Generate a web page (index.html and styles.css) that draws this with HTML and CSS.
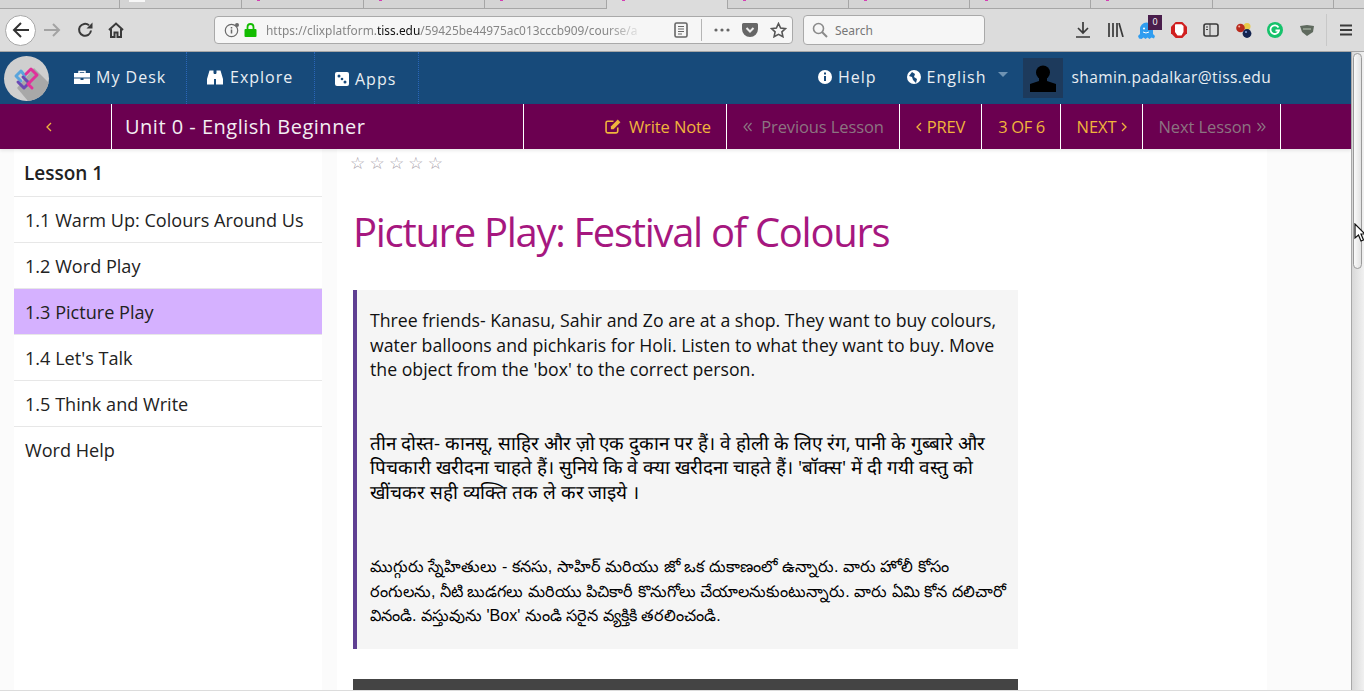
FILE: index.html
```html
<!DOCTYPE html>
<html lang="en">
<head>
<meta charset="UTF-8" />
<meta name="viewport" content="width=device-width, initial-scale=1" />
<title>Picture Play: Festival of Colours</title>
<link rel="stylesheet" href="styles.css">
</head>
<body>
<!-- browser chrome -->
<div class="tabs">
    <span class="tab" style="width:119px"></span>
    <span class="tab" style="width:121px"><i class="fav fav-white"></i></span>
    <span class="tab" style="width:121px"><i class="fav"></i></span>
    <span class="tab" style="width:120px"><i class="fav"></i></span>
    <span class="tab" style="width:121px"><i class="fav"></i></span>
    <span class="tab tab-active" style="width:120px"><i class="fav"></i></span>
    <span class="tab" style="width:120px"><i class="fav"></i></span>
    <span class="tab" style="width:120px"><i class="fav"></i></span>
    <span class="tab" style="width:120px"><i class="fav"></i></span>
    <span class="tab" style="width:121px"><i class="fav"></i></span>
    <span class="tab" style="width:120px"></span>
</div>
<div class="toolbar">
    <span class="back-btn">
        <svg width="20" height="20" viewBox="0 0 20 20"><path d="M18 10H3M10 3l-7 7 7 7" fill="none" stroke="#333" stroke-width="2"/></svg>
    </span>
    <svg class="tool-forward" width="18" height="18" viewBox="0 0 18 18"><path d="M1 9h15M10 3l6 6-6 6" fill="none" stroke="#a3a3a3" stroke-width="2"/></svg>
    <svg class="tool-reload" width="18" height="18" viewBox="0 0 18 18"><path d="M15 9.500a6 6 0 1 1-2-5.200" fill="none" stroke="#3a3a3a" stroke-width="2"/><path d="M16.500 1.500v6h-6z" fill="#3a3a3a"/></svg>
    <svg class="tool-home" width="18" height="18" viewBox="0 0 18 18"><path d="M2 9l7-6.500L16 9M4 8v8h3.500v-4.500h3V16H14V8" fill="none" stroke="#3a3a3a" stroke-width="2"/></svg>
    <div class="urlbar">
        <svg width="16" height="16" viewBox="0 0 16 16"><circle cx="7.500" cy="8.500" r="6.200" fill="none" stroke="#6a6a6a" stroke-width="1.200"/><path d="M7.500 7.500v4M7.500 5v1.500" stroke="#6a6a6a" stroke-width="1.500"/><circle cx="13" cy="3" r="2" fill="#6a6a6a"/></svg>
        <svg class="lock" width="13" height="14" viewBox="0 0 13 14"><path d="M3.500 6V4a3 3 0 0 1 6 0v2" fill="none" stroke="#12bc00" stroke-width="1.800"/><rect x="0.500" y="6" width="12" height="8" rx="1" fill="#12bc00"/></svg>
        <span class="url"><span class="url-dim">https://clixplatform.</span>tiss.edu<span class="url-dim">/59425be44975ac013cccb909/course/a</span></span>
        <svg class="reader" width="14" height="16" viewBox="0 0 14 16"><rect x="1" y="1" width="12" height="14" rx="1.500" fill="none" stroke="#666" stroke-width="1.600"/><path d="M4 4.500h6M4 7h6M4 9.500h6M4 12h4" stroke="#666"/></svg>
        <span class="url-sep"></span>
        <svg class="dots" width="16" height="4" viewBox="0 0 16 4"><circle cx="2" cy="2" r="1.600" fill="#666"/><circle cx="8" cy="2" r="1.600" fill="#666"/><circle cx="14" cy="2" r="1.600" fill="#666"/></svg>
        <svg class="pocket" width="16" height="15" viewBox="0 0 16 15"><path d="M1.500 0h13A1.500 1.500 0 0 1 16 1.500V6a8 8 0 0 1-16 0V1.500A1.500 1.500 0 0 1 1.500 0z" fill="#666"/><path d="M4.500 5L8 8.500 11.500 5" fill="none" stroke="#eee" stroke-width="2"/></svg>
        <svg class="star" width="17" height="16" viewBox="0 0 17 16"><path d="M8.500 1.500l2.100 4.500 4.900.6-3.600 3.300 1 4.800-4.400-2.400-4.400 2.400 1-4.800L1.500 6.600l4.900-.6z" fill="none" stroke="#555" stroke-width="1.600"/></svg>
    </div>
    <div class="searchbar">
        <svg width="16" height="16" viewBox="0 0 16 16"><circle cx="6.500" cy="6.500" r="5" fill="none" stroke="#8a8a8a" stroke-width="1.600"/><path d="M10 10l5 5" stroke="#8a8a8a" stroke-width="2"/></svg>
        <span>Search</span>
    </div>
    <div class="tool-icons">
        <svg width="14" height="16" viewBox="0 0 14 16"><path d="M7 0v10M2 6l5 5 5-5M0 15h14" fill="none" stroke="#3a3a3a" stroke-width="1.700"/></svg>
        <svg class="ti-lib" width="16" height="14" viewBox="0 0 16 14"><path d="M1 0v14M5 0v14M9 0v14M11 0l4 14" fill="none" stroke="#3a3a3a" stroke-width="1.700"/></svg>
        <span class="ghost">
            <svg width="17" height="17" viewBox="0 0 17 17"><path d="M1 16.500L0 14l2-2V7a6.500 6.500 0 0 1 13 0v5l2 2-1 2.500-2.500-1-2 1.500-2-1.500-2 1.500-2-1.500-2 1.500z" fill="#2f9df0"/><circle cx="6" cy="6.500" r="1" fill="#fff"/><path d="M5 10q3 2 6 0" stroke="#fff" fill="none"/></svg>
            <span class="ghost-badge">0</span>
        </span>
        <svg class="ti-stop" width="16" height="16" viewBox="0 0 16 16"><path d="M4.700 0h6.600L16 4.700v6.600L11.300 16H4.700L0 11.300V4.700z" fill="#d01f1f"/><path d="M4 3.500a1 1 0 0 1 1-1.200h5.500L12.500 4v6l-2 3.500h-4L4 10z" fill="#fff"/></svg>
        <svg class="ti-side" width="16" height="14" viewBox="0 0 16 14"><rect x="1" y="1" width="14" height="12" rx="2" fill="none" stroke="#3a3a3a" stroke-width="1.600"/><path d="M7 1v12M3 4h2M3 6.500h2" stroke="#3a3a3a"/></svg>
        <svg class="ti-balls" width="16" height="15" viewBox="0 0 16 15"><circle cx="11" cy="3.500" r="3.500" fill="#e8c94a"/><circle cx="4.500" cy="5" r="4.300" fill="#b92a1c"/><circle cx="11" cy="10.500" r="4.400" fill="#14244f"/><circle cx="3.200" cy="3.600" r="1" fill="#f3b5a8"/><circle cx="10" cy="9" r="1.100" fill="#7f9ad8"/></svg>
        <svg class="ti-gram" width="16" height="16" viewBox="0 0 16 16"><circle cx="8" cy="8" r="8" fill="#15c26b"/><path d="M11.500 5.500a4.300 4.300 0 1 0 .5 3H8.500" fill="none" stroke="#fff" stroke-width="1.800"/></svg>
        <svg class="ti-mask" width="14" height="11" viewBox="0 0 14 11"><path d="M0 1l7-1 7 1-1 6-6 4-5-4z" fill="#5f6a5e"/><path d="M3 4h8" stroke="#b9c6b4"/></svg>
        <span class="tool-sep"></span>
        <svg class="ti-menu" width="12" height="12" viewBox="0 0 12 12"><path d="M0 1.500h12M0 6h12M0 10.500h12" stroke="#3a3a3a" stroke-width="1.800"/></svg>
    </div>
</div>

<div class="viewport">
    <div class="page">
        <nav class="topnav">
            <div class="logo">
                <svg width="45" height="45" viewBox="0 0 45 45">
                    <path d="M30 12l15 15v18H24L13 32z" fill="#a8a8a8"/>
                    <g fill="none" stroke-width="3" stroke-linejoin="round" stroke-linecap="round">
                        <path d="M21 20l-4-5-5 5 5 5" stroke="#5aa5dc"/>
                        <path d="M14 26l6 6 5-5-6-6" stroke="#6b49b4"/>
                        <path d="M22 18l5-5 6 6-9 9 4 4" stroke="#e0329a"/>
                    </g>
                </svg>
            </div>
            <a class="nav-item nav-desk">
                <svg width="16" height="14" viewBox="0 0 16 14"><path d="M5 3V1.500h6V3" fill="none" stroke="#fff" stroke-width="1.500"/><path d="M0 3h16v4.500H0zM0 8.500h6.500V10h3V8.500H16V14H0z" fill="#fff"/></svg>
                My Desk
            </a>
            <a class="nav-item nav-explore">
                <svg width="16" height="15" viewBox="0 0 16 15"><path d="M2.500 0.500h4v3H7v11H0V9zM13.500 0.500h-4v3H9v11h7V9z" fill="#fff"/><path d="M7 4h2v5H7z" fill="#fff"/></svg>
                Explore
            </a>
            <a class="nav-item nav-apps">
                <svg width="14" height="14" viewBox="0 0 14 14"><rect width="14" height="14" rx="2" fill="#fff"/><circle cx="4" cy="4" r="1.500" fill="#17497a"/><circle cx="10" cy="10" r="1.500" fill="#17497a"/><circle cx="7" cy="7" r="1.300" fill="#17497a"/></svg>
                Apps
            </a>
            <a class="nav-right nav-help">
                <svg width="14" height="14" viewBox="0 0 14 14"><circle cx="7" cy="7" r="7" fill="#fff"/><path d="M7 6v5M7 2.500v2" stroke="#17497a" stroke-width="2"/></svg>
                Help
            </a>
            <a class="nav-right nav-lang">
                <svg width="14" height="14" viewBox="0 0 14 14"><circle cx="7" cy="7" r="7" fill="#fff"/><path d="M5 2l3 2-1 3 3 2-1 4-3-3-1-3-3-1z" fill="#17497a"/></svg>
                English
                <span class="caret"></span>
            </a>
            <span class="avatar">
                <svg width="28" height="27" viewBox="0 0 28 27"><circle cx="14" cy="7.500" r="7" fill="#000"/><path d="M10 13h8v3l9 3v8H1v-8l9-3z" fill="#000"/></svg>
            </span>
            <span class="username">shamin.padalkar@tiss.edu</span>
        </nav>

        <div class="subnav">
            <a class="sub-back">
                <svg width="6" height="10" viewBox="0 0 6 10"><path d="M5 1L1 5l4 4" fill="none" stroke="#f0b43c" stroke-width="1.300"/></svg>
            </a>
            <div class="sub-title">Unit 0 - English Beginner</div>
            <a class="sub-item sub-note">
                <svg width="17" height="15" viewBox="0 0 16 14"><path d="M12 8v3.500a1.500 1.500 0 0 1-1.500 1.500h-8A1.500 1.500 0 0 1 1 11.500v-8A1.500 1.500 0 0 1 2.500 2H8" fill="none" stroke="#f0b43c" stroke-width="1.500"/><path d="M5.500 7L12 .5 14.500 3 8 9.500H5.500z" fill="#f0b43c"/></svg>
                Write Note
            </a>
            <a class="sub-item sub-prevlesson dim">
                <svg width="9" height="10" viewBox="0 0 9 10"><path d="M4.500 1L1 5l3.500 4M8.500 1L5 5l3.500 4" fill="none" stroke="#8b7481" stroke-width="1.200"/></svg>
                Previous Lesson
            </a>
            <a class="sub-item sub-prev">
                <svg width="6" height="10" viewBox="0 0 6 10"><path d="M5 1L1 5l4 4" fill="none" stroke="#f0b43c" stroke-width="1.300"/></svg>
                PREV
            </a>
            <a class="sub-item sub-count">3 OF 6</a>
            <a class="sub-item sub-next">
                NEXT
                <svg width="6" height="10" viewBox="0 0 6 10"><path d="M1 1l4 4-4 4" fill="none" stroke="#f0b43c" stroke-width="1.300"/></svg>
            </a>
            <a class="sub-item sub-nextlesson dim">
                Next Lesson
                <svg width="9" height="10" viewBox="0 0 9 10"><path d="M.5 1L4 5 .5 9M4.500 1L8 5 4.500 9" fill="none" stroke="#8b7481" stroke-width="1.200"/></svg>
            </a>
        </div>

        <div class="main">
            <aside class="sidebar">
                <div class="side-head">Lesson 1</div>
                <a class="side-link">1.1 Warm Up: Colours Around Us</a>
                <a class="side-link">1.2 Word Play</a>
                <a class="side-link active">1.3 Picture Play</a>
                <a class="side-link">1.4 Let's Talk</a>
                <a class="side-link">1.5 Think and Write</a>
                <a class="side-link last">Word Help</a>
            </aside>
            <section class="content">
                <div class="stars">&#9734;&#9734;&#9734;&#9734;&#9734;</div>
                <h1>Picture Play: Festival of Colours</h1>
                <blockquote class="note">
                    <p class="en">Three friends- Kanasu, Sahir and Zo are at a shop. They want to buy colours, water balloons and pichkaris for Holi. Listen to what they want to buy. Move the object from the 'box' to the correct person.</p>
                    <p class="hi">तीन दोस्त- कानसू, साहिर और ज़ो एक दुकान पर हैं। वे होली के लिए रंग, पानी के गुब्बारे और पिचकारी खरीदना चाहते हैं। सुनिये कि वे क्या खरीदना चाहते हैं। 'बॉक्स' में दी गयी वस्तु को खींचकर सही व्यक्ति तक ले कर जाइये ।</p>
                    <p class="te">ముగ్గురు స్నేహితులు - కనసు, సాహిర్ మరియు జో ఒక దుకాణంలో ఉన్నారు. వారు హోలీ కోసం రంగులను, నీటి బుడగలు మరియు పిచికారీ కొనుగోలు చేయాలనుకుంటున్నారు. వారు ఏమి కోన దలిచారో వినండి. వస్తువును 'Box' నుండి సరైన వ్యక్తికి తరలించండి.</p>
                </blockquote>
                <div class="player"></div>
            </section>
        </div>
    </div>
    <div class="scrollbar"><span class="thumb"></span></div>
</div>
<div class="window-edge"></div>

<!-- mouse pointer caught in the shot -->
<svg class="cursor" width="11" height="19" viewBox="0 0 11 19"><path d="M1 1v14l3.500-3 2.500 6 2.500-1-2.500-6h4z" fill="#fff" stroke="#111" stroke-width="1.200"/></svg>
</body>
</html>
```

FILE: styles.css
```css
html, body { margin: 0; height: 100%; overflow: hidden; }
body { font-family: "Open Sans", sans-serif; background: #d9d9d9; }
a { color: inherit; text-decoration: none; }

/* browser chrome */
.tabs { display: flex; height: 8px; background: #d4d4d4; border-bottom: 1px solid #a6a6a6; }
.tab { height: 8px; border-right: 1px solid #a6a6a6; box-sizing: content-box; flex: none; overflow: hidden; }
.tab-active { background: #dcdcdc; height: 9px; }
.fav { display: block; width: 3px; height: 1px; margin-left: 15px; background: #d43fb4; }
.fav-white { width: 16px; height: 2px; margin-left: 9px; background: #f7f7f7; }

.toolbar { display: flex; align-items: center; height: 42px; background: #dcdcdc; border-bottom: 1px solid #a6a6a6; padding-left: 5px; }
.back-btn { width: 29px; height: 29px; border: 1px solid #a8a8a8; border-radius: 50%; background: #fff; display: flex; align-items: center; justify-content: center; flex: none; }
.tool-forward { margin-left: 7px; }
.tool-reload { margin-left: 15px; }
.tool-home { margin-left: 13px; }
.urlbar { display: flex; align-items: center; width: 579px; height: 28px; margin-left: 89px; padding-left: 9px; box-sizing: border-box; background: #f6f6f6; border: 1px solid #a9a9a9; border-radius: 4px; flex: none; }
.lock { margin-left: 4px; }
.url { margin-left: 9px; width: 395px; font-family: "Noto Sans", sans-serif; font-size: 11.900px; color: #111; white-space: nowrap; overflow: hidden; -webkit-mask-image: linear-gradient(to right, #000 340px, transparent 378px); mask-image: linear-gradient(to right, #000 340px, transparent 378px); }
.url-dim { color: #858585; }
.reader { margin-left: 13px; }
.url-sep { width: 1px; height: 22px; background: #b5b5b5; margin-left: 13px; }
.dots { margin-left: 12px; }
.pocket { margin-left: 12px; }
.star { margin-left: 12px; }
.searchbar { display: flex; align-items: center; gap: 7px; width: 172px; height: 28px; margin-left: 10px; padding-left: 8px; background: #f6f6f6; border: 1px solid #a9a9a9; border-radius: 4px; font-family: "Noto Sans", sans-serif; font-size: 12px; color: #777; flex: none; }
.tool-icons { display: flex; align-items: center; margin-left: 91px; }
.ti-lib { margin-left: 18px; }
.ghost { position: relative; display: flex; margin-left: 14px; width: 24px; }
.ghost-badge { position: absolute; left: 10px; top: -7px; width: 14px; height: 15px; background: #4a1e4c; color: #fff; font-size: 9px; line-height: 13px; text-align: center; }
.ti-stop { margin-left: 9px; }
.ti-side { margin-left: 16px; }
.ti-balls { margin-left: 17px; }
.ti-gram { margin-left: 15px; }
.ti-mask { margin-left: 17px; }
.tool-sep { width: 1px; height: 32px; background: #c8c8c8; margin-left: 12px; }
.ti-menu { margin-left: 13px; }

.viewport { display: flex; height: 638px; background: #fbfbfb; }
.page { width: 1351px; flex: none; overflow: hidden; }
.window-edge { height: 2px; background: #dcdcdc; }

/* blue nav */
.topnav { display: flex; align-items: center; height: 52px; background: #174a7a; color: #e9eef3; font-size: 16px; letter-spacing: 1px; }
.logo { width: 45px; height: 45px; margin-left: 4px; border-radius: 50%; background: #cfcfcf; overflow: hidden; flex: none; }
.nav-item { display: flex; align-items: center; gap: 6px; height: 52px; padding-bottom: 2px; box-sizing: border-box; border-right: 1px dotted #2a66b8; flex: none; }
.nav-desk { width: 138px; padding-left: 25px; }
.nav-explore { width: 128px; padding-left: 20px; gap: 7px; }
.nav-apps { width: 104px; padding-left: 20px; padding-top: 2px; padding-bottom: 0; }
.nav-right { display: flex; align-items: center; gap: 6px; padding-bottom: 2px; flex: none; }
.nav-help { margin-left: 399px; }
.nav-lang { margin-left: 30px; }
.caret { width: 0; height: 0; border-left: 5px solid transparent; border-right: 5px solid transparent; border-top: 5px solid #6f93b3; margin: 0 0 6px 5px; }
.avatar { width: 40px; height: 40px; margin-left: 15px; background: #1d3a5c; display: flex; align-items: flex-end; justify-content: center; flex: none; }
.avatar svg { margin-bottom: 6px; }
.username { margin-left: 9px; padding-bottom: 2px; font-size: 15.500px; letter-spacing: 0.38px; white-space: nowrap; }

/* purple bar */
.subnav { display: flex; align-items: center; height: 45px; background: #6b0050; color: #f0b43c; font-size: 16.500px; box-shadow: 0 2px 3px rgba(0,0,0,0.08); position: relative; }
.subnav > * { height: 45px; box-sizing: border-box; display: flex; align-items: center; flex: none; }
.sub-back { width: 112px; padding-left: 46px; border-right: 1px solid #fff; }
.sub-title { width: 412px; padding-left: 13px; border-right: 1px solid #fff; color: #f3eef2; font-size: 20px; letter-spacing: 0.5px; }
.sub-item { border-right: 1px solid #fff; justify-content: center; gap: 5px; white-space: nowrap; letter-spacing: -0.1px; }
.sub-note { width: 203px; justify-content: flex-end; padding-right: 15px; gap: 7px; }
.sub-prevlesson { width: 173px; gap: 9px; padding-left: 1px; }
.sub-prev { width: 82px; }
.sub-count { width: 79px; padding-left: 1px; letter-spacing: -0.4px; }
.sub-next { width: 82px; padding-left: 1px; }
.sub-nextlesson { width: 138px; padding-left: 1px; }
.dim { color: #8b7481; }

/* page body */
.main { display: flex; align-items: flex-start; height: 541px; padding-left: 14px; background: #fbfbfb; }
.sidebar { width: 308px; height: 541px; background: #fff; flex: none; font-size: 18.100px; color: #222; }
.side-head { height: 48px; line-height: 48px; padding-left: 10px; font-size: 19px; font-weight: 600; border-bottom: 1px solid #e7e7e7; box-sizing: border-box; }
.side-link { display: block; height: 46px; line-height: 46px; padding-left: 11px; border-bottom: 1px solid #e7e7e7; box-sizing: border-box; }
.side-link.active { background: #d5b1ff; }
.side-link.last { border-bottom: none; }

.content { width: 930px; height: 541px; margin-left: 15px; padding-left: 16px; box-sizing: border-box; background: #fff; flex: none; overflow: hidden; }
.stars { height: 28px; margin-left: -3px; color: #a8a0aa; font-family: "DejaVu Sans", sans-serif; font-size: 17px; line-height: 29px; letter-spacing: 4.200px; white-space: nowrap; }
h1 { margin: 27px 0 0; font-size: 40px; font-weight: 400; line-height: 55px; color: #a6177f; letter-spacing: -1.300px; white-space: nowrap; }
.note { width: 665px; height: 359px; margin: 31px 0 0; padding: 18px 12px 0 13px; box-sizing: border-box; background: #f5f5f5; border-left: 4px solid #5f3f92; color: #111; }
.note p { margin: 0; }
.en { font-size: 17.700px; line-height: 24.500px; }
.note .hi { margin-top: 49px; font-size: 18.900px; line-height: 24.500px; color: #000; }
.note .te { margin-top: 50px; font-family: "Liberation Sans", sans-serif; font-size: 16.100px; line-height: 24.500px; color: #000; }
.player { width: 665px; height: 60px; margin-top: 30px; background: #444; }

/* scrollbar */
.scrollbar { width: 13px; flex: none; background: linear-gradient(to right, #d8d8d8, #f1f1f1); border-left: 1px solid #a8a8a8; box-sizing: border-box; }
.thumb { display: block; width: 9px; height: 216px; margin: 1px 0 0 1px; background: linear-gradient(to right, #fafafa, #e2e2e2); border: 1px solid #9a9a9a; border-radius: 5px; box-sizing: border-box; }
.cursor { position: absolute; left: 1354px; top: 223px; }
```
